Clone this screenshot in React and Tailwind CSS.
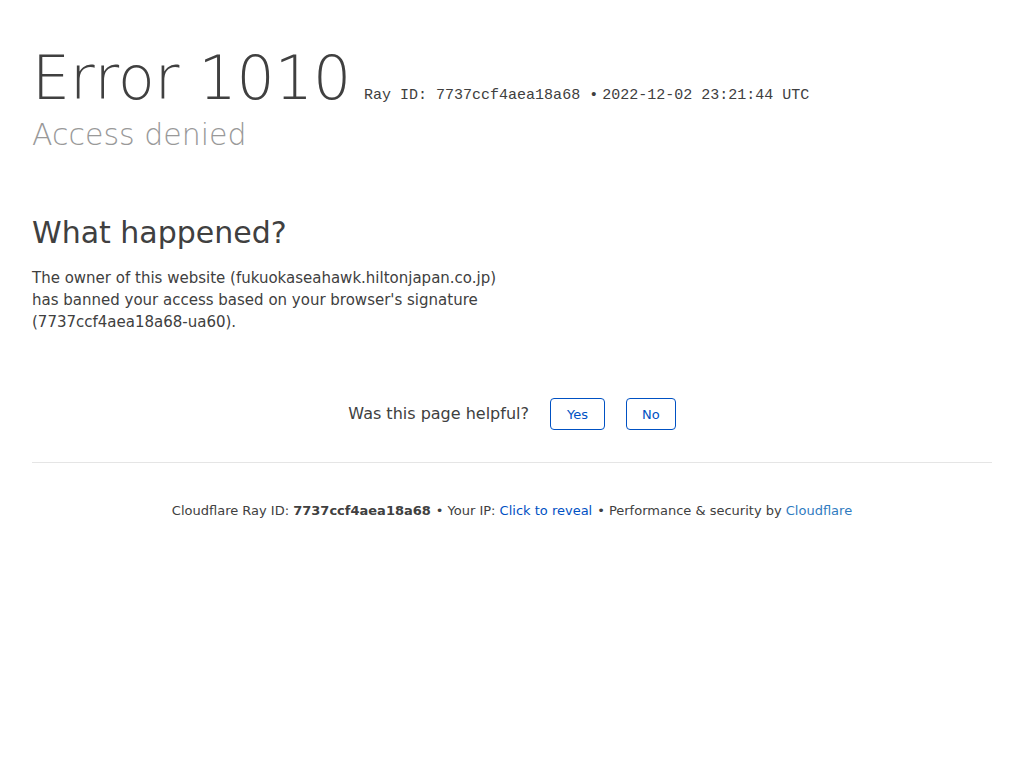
export default function App() {
  return (
    <div className="min-h-screen bg-white px-8 pt-[48px] text-[#404040] font-['DejaVu_Sans',sans-serif]">
      {/* overview */}
      <h1 className="text-[60px] leading-[60px] font-light whitespace-nowrap">
        <span>Error</span> <span>1010</span>
        <small className="ml-[13px] text-[15px] leading-none font-normal font-['Liberation_Mono',monospace]">
          Ray ID: 7737ccf4aea18a68 •<span className="ml-[4px]">2022-12-02 23:21:44 UTC</span>
        </small>
      </h1>
      <h2 className="mt-[12px] text-[30px] leading-[30px] font-light text-[#999999]">Access denied</h2>

      {/* details */}
      <div className="mt-[68px] w-1/2">
        <h2 className="text-[30px] leading-[30px] font-normal">What happened?</h2>
        <p className="mt-[19px] text-[15px] leading-[22px]">
          The owner of this website (fukuokaseahawk.hiltonjapan.co.jp) has banned your access based on your browser's signature (7737ccf4aea18a68-ua60).
        </p>
      </div>

      {/* feedback */}
      <div className="mt-[65px] flex items-center justify-center">
        <span className="text-[16px] leading-[20px]">Was this page helpful?</span>
        <button className="ml-[21px] h-[32px] px-4 rounded-[4px] border border-[#0051c3] text-[13px] text-[#0051c3] leading-none">Yes</button>
        <button className="ml-[21px] h-[32px] px-[15px] rounded-[4px] border border-[#0051c3] text-[13px] text-[#0051c3] leading-none">No</button>
      </div>

      {/* footer */}
      <div className="mt-[32px] border-t border-[#e5e5e5] pt-[39px] text-center text-[13px] leading-[18px]">
        <span>Cloudflare Ray ID: </span>
        <strong className="font-bold">7737ccf4aea18a68</strong>
        <span className="ml-[5px] mr-[4px]">•</span>
        <span>Your IP: </span>
        <button className="text-[#0051c3]">Click to reveal</button>
        <span className="ml-[5px] mr-[4px]">•</span>
        <span>Performance &amp; security by </span>
        <a className="text-[#2f7bbf]">Cloudflare</a>
      </div>
    </div>
  );
}
